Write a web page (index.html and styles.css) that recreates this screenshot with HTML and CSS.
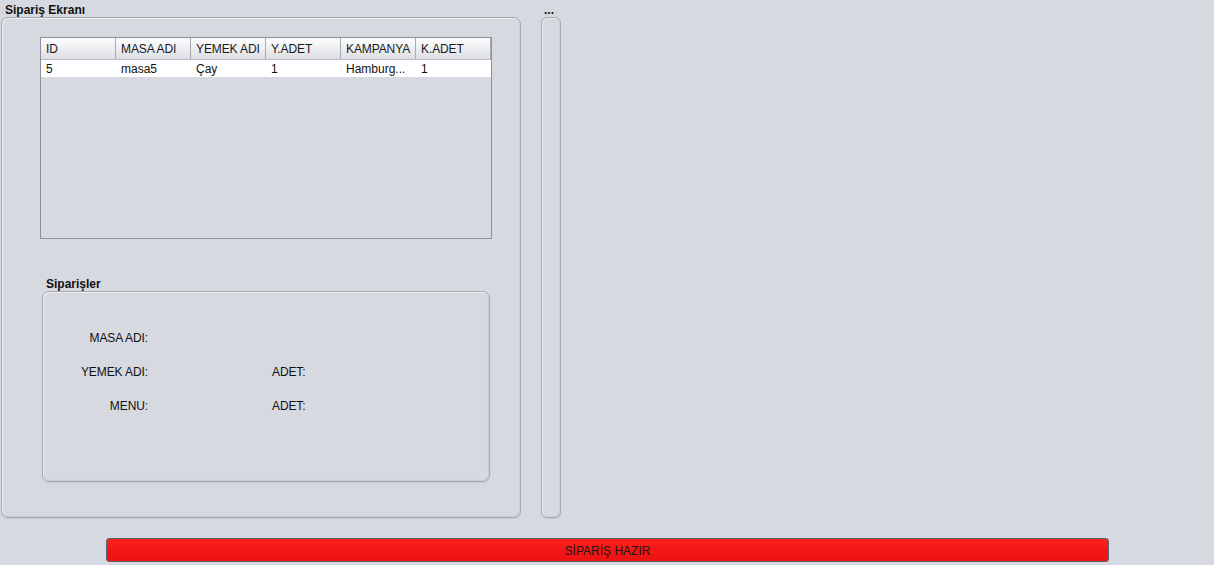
FILE: index.html
```html
<!DOCTYPE html>
<html>
<head>
<meta charset="utf-8">
<link rel="stylesheet" href="styles.css">
</head>
<body>
<div class="app">
  <div class="top">
    <div class="group main-group">
      <div class="group-title">Sipariş Ekranı</div>
      <div class="box main-box">
        <div class="table">
          <div class="thead">
            <div class="th">ID</div>
            <div class="th">MASA ADI</div>
            <div class="th">YEMEK ADI</div>
            <div class="th">Y.ADET</div>
            <div class="th">KAMPANYA</div>
            <div class="th">K.ADET</div>
          </div>
          <div class="tr">
            <div class="td">5</div>
            <div class="td">masa5</div>
            <div class="td">Çay</div>
            <div class="td">1</div>
            <div class="td">Hamburg...</div>
            <div class="td">1</div>
          </div>
        </div>
        <div class="group sub-group">
          <div class="group-title">Siparişler</div>
          <div class="box sub-box">
            <div class="form">
              <div class="lbl">MASA ADI:</div><div></div><div></div>
              <div class="lbl">YEMEK ADI:</div><div></div><div class="lbl2">ADET:</div>
              <div class="lbl">MENU:</div><div></div><div class="lbl2">ADET:</div>
            </div>
          </div>
        </div>
      </div>
    </div>
    <div class="group side-group">
      <div class="group-title">...</div>
      <div class="box side-box"></div>
    </div>
  </div>
  <div class="bottom">
    <button class="ready-btn">SİPARİŞ HAZIR</button>
  </div>
</div>
</body>
</html>
```
FILE: styles.css
```css
html, body {
  margin: 0;
  padding: 0;
  background: #d6d9df;
  font-family: "Liberation Sans", Arial, sans-serif;
  font-size: 12px;
  color: #111;
}
.app {
  display: flex;
  flex-direction: column;
  width: 1214px;
  height: 565px;
}
.top {
  display: flex;
  padding-left: 1px;
  gap: 20px;
}
.group {
  display: flex;
  flex-direction: column;
}
.group-title {
  height: 17px;
  line-height: 20px;
  font-weight: bold;
  padding-left: 4px;
  color: #111;
}
.box {
  border: 1px solid #a6aab0;
  border-radius: 7px;
  box-shadow: inset 1px 1px 1px rgba(255,255,255,0.55), inset -1px -1px 1px rgba(0,0,0,0.06), 0 1px 1px rgba(0,0,0,0.08);
  box-sizing: border-box;
}
.main-group { width: 520px; }
.main-box {
  height: 501px;
  padding: 19px 0 0 38px;
  display: flex;
  flex-direction: column;
}
.table {
  width: 452px;
  height: 202px;
  box-sizing: border-box;
  border: 1px solid #8d9096;
  background: #d6d9df;
}
.thead {
  display: flex;
  height: 22px;
  background: linear-gradient(#fdfdfe 0%, #eef0f2 45%, #dcdfe3 100%);
  border-bottom: 1px solid #b7bac0;
  box-sizing: border-box;
}
.th {
  width: 75px;
  box-sizing: border-box;
  border-right: 1px solid #a9acb2;
  padding-left: 5px;
  line-height: 22px;
  letter-spacing: -0.1px;
  color: #1a1a1a;
}
.tr {
  display: flex;
  height: 17px;
  background: #fff;
}
.td {
  width: 75px;
  box-sizing: border-box;
  padding-left: 5px;
  line-height: 19px;
  height: 17px;
  color: #111;
}
.sub-group {
  margin-top: 35px;
  margin-left: 2px;
  width: 448px;
}
.sub-box {
  height: 191px;
  padding-top: 29px;
}
.form {
  display: grid;
  grid-template-columns: 105px 124px auto;
  grid-auto-rows: 34px;
  align-items: center;
  letter-spacing: -0.1px;
}
.lbl {
  text-align: right;
}
.lbl2 {
  text-align: left;
}
.side-group { width: 20px; }
.side-group .group-title { padding-left: 3px; }
.side-box {
  width: 20px;
  height: 501px;
  border-radius: 6px;
}
.bottom {
  display: flex;
  padding: 20px 0 0 106px;
}
.ready-btn {
  width: 1003px;
  height: 24px;
  border: 1px solid #5c636e;
  border-radius: 3px;
  background: linear-gradient(#ff2020 0%, #f41616 50%, #ee1212 100%);
  font-family: "Liberation Sans", Arial, sans-serif;
  font-size: 12px;
  color: #1a1a1a;
  padding: 2px 0 0 0;
}
```
